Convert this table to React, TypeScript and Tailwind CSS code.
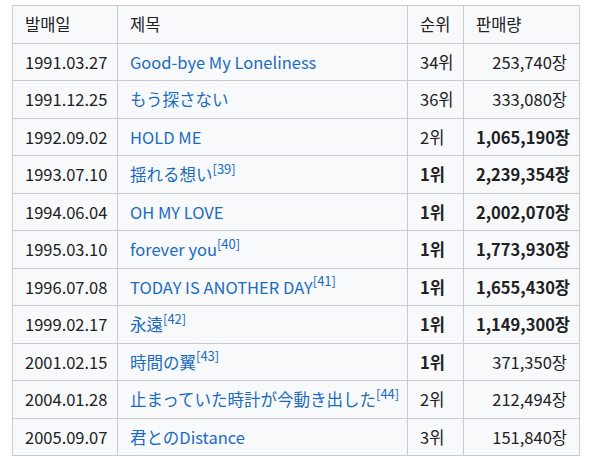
import React from "react";

type Row = {
  date: string;
  title: string;
  ref?: string;
  rank: string;
  rankBold?: boolean;
  sales: string;
  salesBold?: boolean;
};

const rows: Row[] = [
  { date: "1991.03.27", title: "Good-bye My Loneliness", rank: "34위", sales: "253,740장" },
  { date: "1991.12.25", title: "もう探さない", rank: "36위", sales: "333,080장" },
  { date: "1992.09.02", title: "HOLD ME", rank: "2위", sales: "1,065,190장", salesBold: true },
  { date: "1993.07.10", title: "揺れる想い", ref: "[39]", rank: "1위", rankBold: true, sales: "2,239,354장", salesBold: true },
  { date: "1994.06.04", title: "OH MY LOVE", rank: "1위", rankBold: true, sales: "2,002,070장", salesBold: true },
  { date: "1995.03.10", title: "forever you", ref: "[40]", rank: "1위", rankBold: true, sales: "1,773,930장", salesBold: true },
  { date: "1996.07.08", title: "TODAY IS ANOTHER DAY", ref: "[41]", rank: "1위", rankBold: true, sales: "1,655,430장", salesBold: true },
  { date: "1999.02.17", title: "永遠", ref: "[42]", rank: "1위", rankBold: true, sales: "1,149,300장", salesBold: true },
  { date: "2001.02.15", title: "時間の翼", ref: "[43]", rank: "1위", rankBold: true, sales: "371,350장" },
  { date: "2004.01.28", title: "止まっていた時計が今動き出した", ref: "[44]", rank: "2위", sales: "212,494장" },
  { date: "2005.09.07", title: "君とのDistance", rank: "3위", sales: "151,840장" },
];

const cell = "border border-[#c8ccd1] px-3 py-[5px] h-[37.5px] leading-[26.5px] align-middle whitespace-nowrap";

export default function App() {
  return (
    <div
      className="w-[613px] h-[461px] bg-white pt-[5px] pl-[12px]"
      style={{ fontFamily: '"Noto Sans CJK KR", "Noto Sans", sans-serif' }}
    >
      <table className="border-collapse table-fixed w-[567px] bg-[#f8f9fa] text-[16.5px] text-[#202122]">
        <colgroup>
          <col className="w-[105px]" />
          <col className="w-[290px]" />
          <col className="w-[56px]" />
          <col className="w-[116px]" />
        </colgroup>
        <thead>
          <tr>
            <th className={`${cell} font-normal text-left`}>발매일</th>
            <th className={`${cell} font-normal text-left`}>제목</th>
            <th className={`${cell} font-normal text-left`}>순위</th>
            <th className={`${cell} font-normal text-left`}>판매량</th>
          </tr>
        </thead>
        <tbody>
          {rows.map((r) => (
            <tr key={r.date}>
              <td className={cell}>{r.date}</td>
              <td className={`${cell} text-[#1a6bc0]`}>
                {r.title}
                {r.ref && (
                  <sup className="text-[13px] leading-none relative top-[-1px] align-super">{r.ref}</sup>
                )}
              </td>
              <td className={`${cell} ${r.rankBold ? "font-bold" : ""}`}>{r.rank}</td>
              <td className={`${cell} text-right ${r.salesBold ? "font-bold" : ""}`}>{r.sales}</td>
            </tr>
          ))}
        </tbody>
      </table>
    </div>
  );
}
